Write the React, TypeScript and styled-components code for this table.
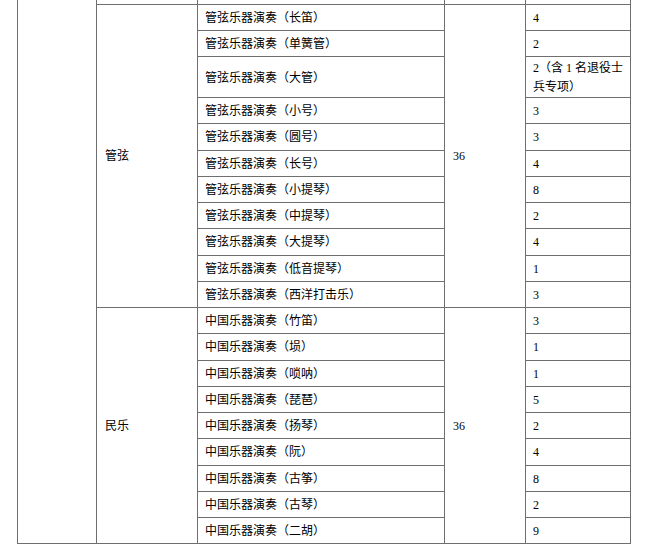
import React from "react";
import styled, { createGlobalStyle } from "styled-components";

const GlobalStyle = createGlobalStyle`
  html, body {
    margin: 0;
    padding: 0;
    background: #ffffff;
  }
  body {
    font-family: "Liberation Serif", "Noto Sans CJK SC", serif;
    color: #000000;
  }
`;

const Page = styled.div`
  padding-left: 17px;
  width: 653px;
  height: 550px;
  overflow: hidden;
  box-sizing: border-box;
`;

const Table = styled.table`
  border-collapse: collapse;
  table-layout: fixed;
  width: 613px;
  font-size: 12px;
  line-height: 19px;
`;

const Row = styled.tr<{ $partial?: boolean }>`
  height: ${(p) => (p.$partial ? "4px" : "26.25px")};
`;

const Cell = styled.td<{ $partial?: boolean; $open?: boolean }>`
  border: 1px solid #6f6f6f;
  ${(p) => (p.$open ? "border-top: none;" : "")}
  padding: ${(p) => (p.$partial ? "0" : "2px 7px 0")};
  vertical-align: middle;
  text-align: left;
  white-space: nowrap;
  overflow: hidden;
`;

const SpanCell = styled(Cell)`
  padding-left: 8px;
`;

type Item = { name: string; count: React.ReactNode };

const guanxian: Item[] = [
  { name: "管弦乐器演奏（长笛）", count: "4" },
  { name: "管弦乐器演奏（单簧管）", count: "2" },
  {
    name: "管弦乐器演奏（大管）",
    count: (
      <>
        2（含 1 名退役士
        <br />
        兵专项）
      </>
    ),
  },
  { name: "管弦乐器演奏（小号）", count: "3" },
  { name: "管弦乐器演奏（圆号）", count: "3" },
  { name: "管弦乐器演奏（长号）", count: "4" },
  { name: "管弦乐器演奏（小提琴）", count: "8" },
  { name: "管弦乐器演奏（中提琴）", count: "2" },
  { name: "管弦乐器演奏（大提琴）", count: "4" },
  { name: "管弦乐器演奏（低音提琴）", count: "1" },
  { name: "管弦乐器演奏（西洋打击乐）", count: "3" },
];

const minyue: Item[] = [
  { name: "中国乐器演奏（竹笛）", count: "3" },
  { name: "中国乐器演奏（埙）", count: "1" },
  { name: "中国乐器演奏（唢呐）", count: "1" },
  { name: "中国乐器演奏（琵琶）", count: "5" },
  { name: "中国乐器演奏（扬琴）", count: "2" },
  { name: "中国乐器演奏（阮）", count: "4" },
  { name: "中国乐器演奏（古筝）", count: "8" },
  { name: "中国乐器演奏（古琴）", count: "2" },
  { name: "中国乐器演奏（二胡）", count: "9" },
];

const Group: React.FC<{ title: string; total: string; items: Item[] }> = ({
  title,
  total,
  items,
}) => (
  <>
    {items.map((it, i) => (
      <Row key={it.name}>
        {i === 0 && <SpanCell rowSpan={items.length}>{title}</SpanCell>}
        <Cell>{it.name}</Cell>
        {i === 0 && <SpanCell rowSpan={items.length}>{total}</SpanCell>}
        <Cell>{it.count}</Cell>
      </Row>
    ))}
  </>
);

export default function App() {
  const totalRows = 1 + guanxian.length + minyue.length;
  return (
    <>
      <GlobalStyle />
      <Page>
        <Table>
          <colgroup>
            <col style={{ width: 79 }} />
            <col style={{ width: 101 }} />
            <col style={{ width: 247 }} />
            <col style={{ width: 81 }} />
            <col style={{ width: 105 }} />
          </colgroup>
          <tbody>
            <Row $partial>
              <Cell $partial $open rowSpan={totalRows} />
              <Cell $partial $open />
              <Cell $partial $open />
              <Cell $partial $open />
              <Cell $partial $open />
            </Row>
            <Group title="管弦" total="36" items={guanxian} />
            <Group title="民乐" total="36" items={minyue} />
          </tbody>
        </Table>
      </Page>
    </>
  );
}
